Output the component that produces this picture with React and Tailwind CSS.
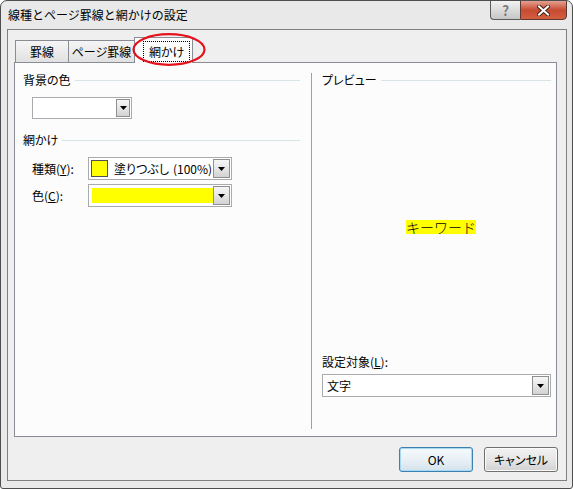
import React from "react";

function DropBtn({ className = "" }) {
  return (
    <div
      className={`flex items-center justify-center border border-[#8e8f8f] bg-linear-to-b from-[#f6f6f6] via-[#e6e6e6] to-[#d2d2d2] ${className}`}
    >
      <svg width="7" height="4" viewBox="0 0 7 4">
        <path d="M0 0h7L3.5 4z" fill="#000" />
      </svg>
    </div>
  );
}

function Heading({ children, className = "" }) {
  return (
    <div className={`flex items-center h-[16px] gap-[4px] ${className}`}>
      <span className="leading-[16px] whitespace-nowrap">{children}</span>
      <div className="flex-1 h-px bg-[#d7e4e8]" />
    </div>
  );
}

export default function App() {
  return (
    <div className="w-[573px] h-[489px] bg-white">
      <div className="w-[573px] h-[489px] flex flex-col border border-[#4e4e4e] rounded-t-[7px] rounded-b-[3px] bg-[#e9e9e9] text-black font-['Noto_Sans_CJK_JP','Noto_Sans',sans-serif] text-[12px] overflow-hidden">
        {/* Title bar */}
        <div className="flex h-[28px] items-start shrink-0">
          <div className="flex-1 h-full flex items-center pl-[7px] text-[12px] leading-none whitespace-nowrap">
            線種とページ罫線と網かけの設定
          </div>
          <div className="flex mr-[5px] -mt-px">
            <div className="w-[30px] h-[20px] flex items-center justify-center border border-[#5a5a5a] border-r-0 rounded-bl-[4px] bg-linear-to-b from-[#f2f2f2] via-[#dcdcdc] to-[#c6c6c6] text-[#7b7b7b] font-bold text-[14px] leading-none [text-shadow:0_0_1px_#fff]">
              ?
            </div>
            <div className="w-[47px] h-[20px] flex items-center justify-center border border-[#5a3a32] rounded-br-[4px] bg-linear-to-b from-[#e3a08f] via-[#c74a33] to-[#d35f3f]">
              <svg width="13" height="11" viewBox="0 0 13 11">
                <path d="M2 1.5L11 9.5M11 1.5L2 9.5" stroke="#4a2018" strokeWidth="4" strokeLinecap="square" />
                <path d="M2 1.5L11 9.5M11 1.5L2 9.5" stroke="#ffffff" strokeWidth="2" strokeLinecap="square" />
              </svg>
            </div>
          </div>
        </div>

        {/* Client area */}
        <div className="flex-1 flex flex-col ml-[6px] mr-[5px] mb-[7px] border border-[#7f7f7f] bg-[#efefef] [font-feature-settings:'palt']">
          {/* Tabs */}
          <div className="relative flex items-end pl-[7px] pt-[7px] h-[32px] shrink-0">
            <div className="h-[22px] w-[54px] flex items-center justify-center border border-b-0 border-[#898c95] bg-linear-to-b from-[#f5f5f5] to-[#e1e1e1]">
              罫線
            </div>
            <div className="h-[22px] w-[66px] flex items-center justify-center border border-l-0 border-b-0 border-[#898c95] bg-linear-to-b from-[#f5f5f5] to-[#e1e1e1]">
              ページ罫線
            </div>
            <div className="relative z-10 -ml-px -mb-px h-[26px] w-[59px] flex items-start pl-[8px] pt-[3px] border border-b-0 border-[#898c95] bg-[#fcfcfc]">
              <span className="h-[21px] flex items-center px-[5px] border border-dotted border-[#000]">
                網かけ
              </span>
            </div>
            <svg
              className="absolute left-[124px] top-[3px] z-20"
              width="74"
              height="33"
              viewBox="0 0 74 33"
            >
              <ellipse cx="37" cy="16.5" rx="35.5" ry="15.3" fill="none" stroke="#e5121c" strokeWidth="2.2" />
            </svg>
          </div>

          {/* Panel */}
          <div className="flex-1 flex ml-[6px] mr-[9px] border border-[#898c95] bg-[#fcfcfc]">
            {/* Left column */}
            <div className="w-[296px] flex flex-col pt-[9px]">
              <Heading className="pl-[8px] pr-[11px]">背景の色</Heading>
              <div className="mt-[9px] ml-[17px] w-[100px] h-[22px] flex justify-end p-px border border-[#a9abaf] bg-white">
                <DropBtn className="w-[14px] h-full" />
              </div>

              <Heading className="mt-[13px] pl-[8px] pr-[11px]">網かけ</Heading>

              <div className="mt-[9px] flex items-center pl-[17px]">
                <span className="w-[56px] whitespace-nowrap">
                  種類(<span className="underline">Y</span>):
                </span>
                <div className="w-[144px] h-[23px] flex items-center p-px border border-[#a9abaf] bg-white">
                  <div className="ml-[1px] w-[17px] h-[17px] border border-[#505050] bg-[#ffff00]" />
                  <span className="ml-[6px] flex-1 whitespace-nowrap leading-none">
                    塗りつぶし<span className="ml-[4px]">(100%)</span>
                  </span>
                  <DropBtn className="w-[17px] h-full" />
                </div>
              </div>

              <div className="mt-[4px] flex items-center pl-[17px]">
                <span className="w-[56px] whitespace-nowrap">
                  色(<span className="underline">C</span>):
                </span>
                <div className="w-[144px] h-[23px] flex items-center p-px border border-[#a9abaf] bg-white">
                  <div className="ml-[2px] w-[121px] h-[15px] bg-[#ffff00]" />
                  <div className="flex-1" />
                  <DropBtn className="w-[17px] h-full" />
                </div>
              </div>
            </div>

            {/* Divider */}
            <div className="w-px bg-[#a0a0a0] mt-[10px] mb-[7px]" />

            {/* Right column */}
            <div className="flex-1 flex flex-col pt-[9px] pb-[39px] pl-[10px] pr-[5px]">
              <Heading>プレビュー</Heading>
              <div className="flex-1 flex items-center justify-center pt-[12px] pl-[9px]">
                <span className="bg-[#ffff00] text-[14px] leading-[14px] font-light [font-feature-settings:normal]">
                  キーワード
                </span>
              </div>
              <div className="h-[16px] leading-[16px] whitespace-nowrap">
                設定対象(<span className="underline">L</span>):
              </div>
              <div className="mt-[4px] h-[23px] flex items-center p-px border border-[#a9abaf] bg-white">
                <span className="flex-1 pl-[3px] leading-none">文字</span>
                <DropBtn className="w-[17px] h-full" />
              </div>
            </div>
          </div>

          {/* Buttons */}
          <div className="flex justify-end gap-[11px] pr-[8px] mt-[10px] mb-[8px] shrink-0">
            <button className="w-[74px] h-[25px] flex items-center justify-center rounded-[3px] border border-[#3c7fb1] bg-linear-to-b from-[#f4f9fc] via-[#e9f1f6] to-[#d3e2ec] shadow-[inset_0_0_0_1px_#a6d8f3] text-[12px]">
              OK
            </button>
            <button className="w-[74px] h-[25px] flex items-center justify-center rounded-[3px] border border-[#707070] bg-linear-to-b from-[#f2f2f2] via-[#e6e6e6] to-[#d2d2d2] shadow-[inset_0_0_0_1px_#fbfbfb] text-[12px]">
              キャンセル
            </button>
          </div>
        </div>
      </div>
    </div>
  );
}
